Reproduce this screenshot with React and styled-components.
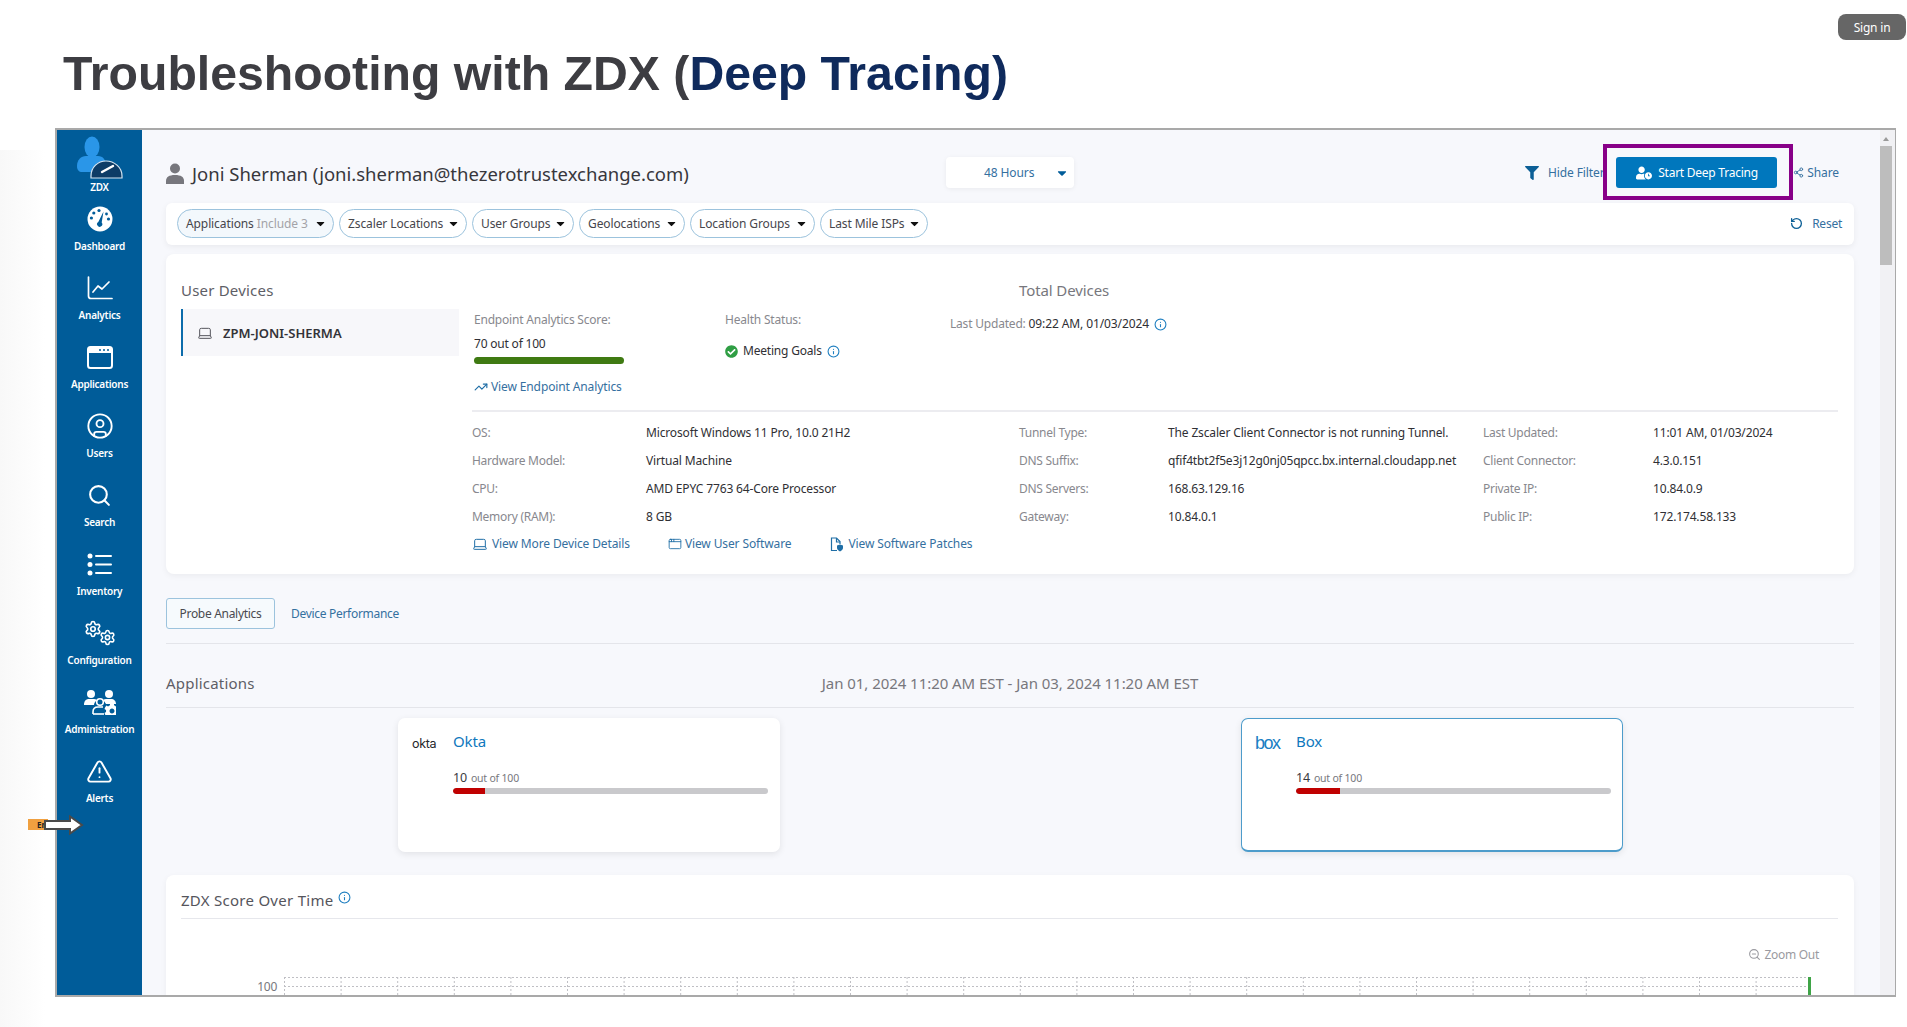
import React from "react"
import styled, { createGlobalStyle } from "styled-components"
import {
  AppWindow, CircleUser, Info, Laptop, RotateCcw, Search, Settings,
  Share2, TrendingUp, TriangleAlert, ZoomOut,
} from "lucide-react"
import { FaCaretDown, FaCheckCircle, FaCog, FaFilter, FaUserClock } from "react-icons/fa"

const GlobalStyle = createGlobalStyle`
  html, body {
    margin: 0;
    background: #fff;
    font-family: "Noto Sans", "Open Sans", sans-serif;
  }
  * { box-sizing: border-box; }
`

const Page = styled.div`
  position: relative;
  width: 1907px;
  height: 1027px;
  overflow: hidden;
  background: linear-gradient(90deg, #f8f8f8, #fff 45px) 0 150px / 50px 100% no-repeat #fff;
`

const SignIn = styled.div`
  position: absolute;
  top: 14px;
  right: 1px;
  width: 68px;
  height: 26px;
  border-radius: 8px;
  background: #666;
  color: #fff;
  font-size: 12px;
  letter-spacing: -0.2px;
  display: flex;
  align-items: center;
  justify-content: center;
`

const Title = styled.h1`
  margin: 0;
  padding: 43px 0 0 63px;
  height: 128px;
  font: bold 48.2px/60px "Liberation Sans", Arial, sans-serif;
  color: #3d3d42;
  span { color: #0f2a5c; }
`

const Frame = styled.div`
  display: flex;
  margin-left: 55px;
  width: 1841px;
  height: 869px;
  border: 2px solid #a9a9a9;
  border-right-width: 1px;
  overflow: hidden;
  background: #f7f8fc;
`

const Sidebar = styled.nav`
  flex: 0 0 85px;
  background: #005c99;
  color: #fff;
`

const NavItem = styled.div`
  height: ${(p) => (p.$logo ? "65px" : "69px")};
  padding-top: ${(p) => (p.$logo ? "6px" : "9px")};
  display: flex;
  flex-direction: column;
  align-items: center;
`

const NavIcon = styled.div`
  height: ${(p) => (p.$logo ? "44px" : "30px")};
  margin-bottom: ${(p) => (p.$logo ? "0" : "5px")};
  display: flex;
  justify-content: center;
  align-items: ${(p) => (p.$logo ? "flex-start" : "center")};
`

const NavLabel = styled.div`
  font-size: 10px;
  line-height: 14px;
  font-weight: 600;
  letter-spacing: -0.25px;
  white-space: nowrap;
`

const Main = styled.main`
  flex: 1;
  min-width: 0;
  padding: 0 26px 0 24px;
  overflow: hidden;
`

const Scrollbar = styled.div`
  flex: 0 0 15px;
  background: #f1f1f4;
  padding-top: 7px;
`

const ScrollArrow = styled.div`
  width: 0;
  margin: 0 auto 5px 3px;
  border: 3.5px solid transparent;
  border-bottom: 4px solid #9a9a9a;
  border-top: 0;
`

const ScrollThumb = styled.div`
  width: 12px;
  height: 119px;
  background: #bdbdbd;
`

const Header = styled.header`
  display: flex;
  align-items: flex-start;
  height: 73px;
  padding-top: 27px;
`

const UserBlock = styled.div`
  flex: 0 0 780px;
  height: 31px;
  display: flex;
  align-items: center;
  gap: 8px;
  padding-top: 2px;
  font-size: 18.5px;
  letter-spacing: 0;
  color: #37373c;
  white-space: nowrap;
`

const RangeSelect = styled.div`
  flex: 0 0 128px;
  height: 31px;
  border-radius: 4px;
  background: #fff;
  box-shadow: 0 1px 5px rgba(0, 0, 0, 0.06);
  display: flex;
  align-items: center;
  justify-content: space-between;
  padding: 0 5px 0 38px;
  font-size: 12px;
  letter-spacing: -0.1px;
  color: #35709f;
`

const HeaderActions = styled.div`
  margin-left: auto;
  display: flex;
  align-items: flex-start;
  padding-right: 15px;
  color: #35709f;
  font-size: 12px;
  letter-spacing: -0.1px;
`

const ActionLink = styled.div`
  height: 31px;
  display: flex;
  align-items: center;
  gap: ${(p) => p.$gap || "3px"};
  white-space: nowrap;
`

const Highlight = styled.div`
  position: relative;
  margin: -13px 0 0 -7px;
  width: 190px;
  height: 56px;
  padding: 9px 0 0 9px;
  border: 4px solid #880088;
  background: #f7f8fc;
`

const DeepTraceButton = styled.button`
  width: 161px;
  height: 31px;
  border: 0;
  border-radius: 3px;
  background: #0077bd;
  color: #fff;
  display: flex;
  align-items: center;
  gap: 6px;
  padding: 0 0 0 20px;
  font: inherit;
  letter-spacing: -0.25px;
  white-space: nowrap;
`

const FilterBar = styled.div`
  height: 42px;
  padding: 0 12px 2px 11px;
  border-radius: 6px;
  background: #fff;
  box-shadow: 0 2px 6px rgba(0, 0, 0, 0.06);
  display: flex;
  align-items: center;
  gap: 5px;
`

const Pill = styled.div`
  height: 29px;
  width: ${(p) => p.$w}px;
  padding: 0 6px 0 8px;
  border: 1px solid #9cc3dd;
  border-radius: 15px;
  background: ${(p) => (p.$active ? "#f3f8fc" : "#fff")};
  display: flex;
  align-items: center;
  justify-content: space-between;
  font-size: 12px;
  letter-spacing: -0.1px;
  color: #46464c;
  white-space: nowrap;
  em { font-style: normal; color: #a3a3a8; }
`

const ResetLink = styled.div`
  margin-left: auto;
  display: flex;
  align-items: center;
  gap: 9px;
  color: #35709f;
  font-size: 12px;
  letter-spacing: -0.25px;
`

const Card = styled.section`
  background: #fff;
  border-radius: 8px;
  box-shadow: 0 2px 6px rgba(0, 0, 0, 0.05);
`

const DeviceCard = styled(Card)`
  margin-top: 9px;
  height: 320px;
  padding: 26px 16px 0 15px;
`

const CardHead = styled.div`
  display: flex;
  height: 20px;
  margin-bottom: 9px;
  font-size: 15px;
  line-height: 20px;
  color: #5e5e66;
`

const HeadCell = styled.div`
  width: ${(p) => p.$w || "auto"};
  color: ${(p) => p.$color || "inherit"};
  letter-spacing: ${(p) => p.$spacing || "0.2px"};
`

const DeviceBody = styled.div`
  display: flex;
`

const DeviceCol = styled.div`
  flex: 0 0 291px;
`

const DeviceRow = styled.div`
  width: 278px;
  height: 47px;
  background: #f7f7fa;
  border-left: 2px solid #0c6cab;
  display: flex;
  align-items: center;
  gap: 10px;
  padding: 1px 0 0 14px;
  font-size: 13px;
  font-weight: 600;
  color: #333338;
`

const InfoCol = styled.div`
  flex: 1;
  min-width: 0;
`

const Summary = styled.div`
  display: flex;
  height: 103px;
  padding: 1px 0 0 2px;
  border-bottom: 2px solid #ececf0;
`

const SummaryCell = styled.div`
  flex: 0 0 ${(p) => p.$w}px;
`

const MutedLine = styled.div`
  height: 20px;
  line-height: 20px;
  font-size: 12px;
  letter-spacing: -0.2px;
  color: #88888e;
  white-space: nowrap;
  b { font-weight: 400; letter-spacing: -0.1px; color: #2f2f34; }
`

const ValueLine = styled(MutedLine)`
  display: flex;
  align-items: center;
  gap: 5px;
  margin-top: ${(p) => p.$top || "0"};
  color: #2f2f34;
  letter-spacing: -0.2px;
`

const ScoreBar = styled.div`
  width: 150px;
  height: 7px;
  margin-top: 3px;
  border-radius: 4px;
  background: #3f7a12;
`

const LinkLine = styled.div`
  display: flex;
  align-items: center;
  gap: ${(p) => p.$gap || "3px"};
  margin-top: ${(p) => p.$top || "0"};
  margin-right: ${(p) => p.$right || "0"};
  color: #35709f;
  font-size: 12px;
  line-height: 20px;
  letter-spacing: -0.12px;
  white-space: nowrap;
`

const DetailGrid = styled.dl`
  display: grid;
  grid-template-columns: 174px 373px 149px 315px 170px 1fr;
  grid-auto-rows: 28px;
  align-items: center;
  margin: 6px 0 0;
  font-size: 12px;
  white-space: nowrap;
  dt { color: #88888e; letter-spacing: -0.27px; }
  dd { margin: 0; color: #2f2f34; letter-spacing: -0.15px; }
`

const LinkRow = styled.div`
  display: flex;
  height: 28px;
  align-items: center;
`

const TabRow = styled.div`
  margin-top: 24px;
  display: flex;
  align-items: center;
  height: 31px;
  gap: 16px;
  font-size: 12px;
  letter-spacing: -0.3px;
`

const ActiveTab = styled.div`
  width: 109px;
  height: 31px;
  border: 1px solid #9cc3dd;
  border-radius: 3px;
  background: #f6fafd;
  color: #4a4a50;
  display: flex;
  align-items: center;
  justify-content: center;
`

const PlainTab = styled.div`
  color: #35709f;
`

const TabDivider = styled.div`
  margin-top: 14px;
  height: 1px;
  background: #e4e5ea;
`

const AppsHead = styled.div`
  display: grid;
  grid-template-columns: 1fr auto 1fr;
  height: 64px;
  padding-top: 29px;
  border-bottom: 1px solid #e4e5ea;
  font-size: 15px;
  line-height: 20px;
  letter-spacing: 0.2px;
  color: #5e5e66;
`

const DateRange = styled.div`
  font-size: 15px;
  letter-spacing: -0.05px;
  color: #77777d;
`

const AppsGrid = styled.div`
  margin-top: 10px;
  display: grid;
  grid-template-columns: 1fr 1fr;
  justify-items: center;
`

const AppCard = styled(Card)`
  width: 382px;
  height: 134px;
  margin-left: ${(p) => (p.$selected ? "0" : "2px")};
  display: flex;
  padding: 12px 11px 0 13px;
  box-shadow: 0 2px 7px rgba(0, 0, 0, 0.09);
  border: ${(p) => (p.$selected ? "1px solid #4d9ccb" : "1px solid transparent")};
  border-bottom-width: ${(p) => (p.$selected ? "2px" : "1px")};
  border-radius: 7px;
`

const AppLogo = styled.div`
  flex: 0 0 41px;
  height: 22px;
  display: flex;
  align-items: center;
  margin-top: 1px;
  font: ${(p) => p.$font};
  color: ${(p) => p.$color};
  letter-spacing: ${(p) => p.$spacing};
`

const AppBody = styled.div`
  flex: 1;
`

const AppName = styled.div`
  height: 22px;
  line-height: 20px;
  font-size: 15px;
  letter-spacing: -0.1px;
  color: #0f78bd;
`

const AppScore = styled.div`
  margin-top: 16px;
  height: 17px;
  font-size: 12.5px;
  line-height: 17px;
  letter-spacing: -0.2px;
  color: #3a3a3f;
  small { margin-left: 4px; font-size: 10.5px; color: #77777d; }
`

const Track = styled.div`
  margin-top: 2px;
  height: 6px;
  border-radius: 3px;
  background: #c9c9cc;
  overflow: hidden;
`

const Fill = styled.div`
  height: 100%;
  background: #c00000;
  border-radius: 3px 0 0 3px;
`

const ScoreCard = styled(Card)`
  margin-top: 23px;
  height: 300px;
  padding: 12px 16px 0 15px;
`

const ScoreHead = styled.div`
  height: 32px;
  border-bottom: 1px solid #e6e7ec;
  display: flex;
  align-items: flex-start;
  gap: 5px;
  font-size: 15px;
  line-height: 26px;
  letter-spacing: 0.27px;
  color: #55555c;
  svg { margin-top: 4px; }
`

const ZoomLink = styled.div`
  margin-top: 27px;
  padding-right: 19px;
  height: 16px;
  display: flex;
  align-items: center;
  justify-content: flex-end;
  gap: 4px;
  font-size: 12px;
  letter-spacing: -0.3px;
  color: #9a9aa0;
`

const ChartRow = styled.div`
  margin-top: 15px;
  display: flex;
  gap: 7px;
`

const AxisLabel = styled.div`
  flex: 0 0 96px;
  text-align: right;
  padding-top: 2px;
  font-size: 12px;
  line-height: 16px;
  letter-spacing: -0.3px;
  color: #77777d;
`

const Pointer = styled.div`
  position: absolute;
  left: 28px;
  top: 815px;
  width: 56px;
  height: 20px;
`

const PointerTag = styled.div`
  position: absolute;
  left: 0;
  top: 4px;
  width: 20px;
  height: 11px;
  padding-left: 9px;
  background: #f0a040;
  color: #222;
  font-size: 8px;
  font-weight: 700;
  line-height: 11px;
`

const PointerArrow = styled.svg`
  position: absolute;
  left: 15px;
  top: 0;
`

const ZdxLogo = () => (
  <svg width="47" height="44" viewBox="0 0 47 44">
    <ellipse cx="16" cy="11" rx="7.500" ry="10.500" fill="#2a96e8" />
    <path d="M1 30c0-6 4-10 9-10h12c5 0 8 4 8 10 0 4-2 6-5 6H6c-3 0-5-2-5-6z" fill="#2a96e8" />
    <path d="M15 42v-2c0-9 7-15 15-15s16 6 16 15v2z" fill="#0d3c66" stroke="#d5e4f0" strokeWidth="1.200" />
    <path d="M26 36l11-6" stroke="#fff" strokeWidth="2.400" strokeLinecap="round" />
  </svg>
)

const DashboardIcon = () => (
  <svg width="26" height="26" viewBox="0 0 26 26">
    <circle cx="13" cy="13" r="12.5" fill="#fff" />
    <g fill="#005c99">
      <circle cx="12" cy="4.500" r="1.600" />
      <circle cx="6.800" cy="7" r="1.600" />
      <circle cx="4.400" cy="12" r="1.600" />
      <circle cx="19.500" cy="8" r="1.400" />
      <circle cx="21.500" cy="13" r="1.600" />
      <path d="M16.500 5.500l-1.800 11a2.600 2.600 0 1 1-3.400-.6z" />
    </g>
  </svg>
)

const AnalyticsIcon = () => (
  <svg width="26" height="24" viewBox="0 0 26 24" fill="none" stroke="#fff" strokeWidth="1.700" strokeLinecap="round" strokeLinejoin="round">
    <path d="M1.500 1v19a2.500 2.500 0 0 0 2.500 2.500h21" />
    <path d="M6 16l5-6 4 3 7-7" />
  </svg>
)

const ApplicationsIcon = () => (
  <svg width="26" height="23" viewBox="0 0 26 23">
    <rect x="1" y="1" width="24" height="21" rx="2.500" fill="none" stroke="#fff" strokeWidth="2" />
    <path d="M1 3.500A2.500 2.500 0 0 1 3.500 1h19A2.500 2.500 0 0 1 25 3.500V7H1z" fill="#fff" />
    <g fill="#005c99">
      <circle cx="13" cy="4" r="1" />
      <circle cx="17" cy="4" r="1" />
      <circle cx="21" cy="4" r="1" />
    </g>
  </svg>
)

const InventoryIcon = () => (
  <svg width="26" height="23" viewBox="0 0 26 23" fill="#fff">
    <circle cx="3" cy="3" r="2.500" />
    <circle cx="3" cy="11.500" r="2.500" />
    <circle cx="3" cy="20" r="2.500" />
    <rect x="8" y="2" width="17" height="2" rx="1" />
    <rect x="8" y="10.500" width="17" height="2" rx="1" />
    <rect x="8" y="19" width="17" height="2" rx="1" />
  </svg>
)

const ConfigIcon = () => (
  <svg width="32" height="26" viewBox="0 0 32 26">
    <Settings x="0" y="0" width="18" height="18" color="#fff" strokeWidth={2.2} />
    <Settings x="15" y="9" width="17" height="17" color="#fff" strokeWidth={2.2} />
  </svg>
)

const AdminIcon = () => (
  <svg width="32" height="25" viewBox="0 0 32 25" fill="#fff">
    <circle cx="7" cy="4" r="4" />
    <circle cx="25" cy="4" r="4" />
    <path d="M0 15c0-4 2-6 5-6h5c1 0 2 .3 3 1-2 1.500-3 3.500-3 5z" />
    <path d="M19 10c1-.7 2-1 3-1h5c3 0 5 2 5 5h-10c-1-1.800-2-3-3-4z" />
    <circle cx="16" cy="12" r="3.300" fill="none" stroke="#fff" strokeWidth="1.600" />
    <path d="M9 24v-2c0-3 2-5 5-5h5" fill="none" stroke="#fff" strokeWidth="1.600" />
    <path d="M9 24h11" stroke="#fff" strokeWidth="1.600" />
    <FaCog x="20" y="13" width="12" height="12" />
  </svg>
)

const PersonIcon = () => (
  <svg width="18" height="22" viewBox="0 0 18 22" fill="#77777d">
    <circle cx="9" cy="5.500" r="5" />
    <path d="M0 21v-3c0-4 3-6 9-6s9 2 9 6v3z" />
  </svg>
)

const PatchIcon = () => (
  <svg width="15" height="15" viewBox="0 0 15 15" fill="none" stroke="#1f6ea6" strokeWidth="1.200">
    <path d="M8 13.500H2.500V1h5L11 4.500V7" />
    <path d="M7.500 1v4H11" />
    <path d="M11 7.500l3 1v2.500c0 1.500-1.500 2.800-3 3.400-1.500-.6-3-1.900-3-3.400V8.500z" fill="#1f6ea6" stroke="none" />
  </svg>
)

const navItems = [
  { label: "Dashboard", icon: <DashboardIcon /> },
  { label: "Analytics", icon: <AnalyticsIcon /> },
  { label: "Applications", icon: <ApplicationsIcon /> },
  { label: "Users", icon: <CircleUser size={28} strokeWidth={1.6} /> },
  { label: "Search", icon: <Search size={25} strokeWidth={2} /> },
  { label: "Inventory", icon: <InventoryIcon /> },
  { label: "Configuration", icon: <ConfigIcon /> },
  { label: "Administration", icon: <AdminIcon /> },
  { label: "Alerts", icon: <TriangleAlert size={27} strokeWidth={1.7} /> },
]

const pills = [
  { label: "Applications", extra: " Include 3", w: 157, active: true },
  { label: "Zscaler Locations", w: 128 },
  { label: "User Groups", w: 102 },
  { label: "Geolocations", w: 106 },
  { label: "Location Groups", w: 125 },
  { label: "Last Mile ISPs", w: 108 },
]

const details = [
  ["OS:", "Microsoft Windows 11 Pro, 10.0 21H2", "Tunnel Type:", "The Zscaler Client Connector is not running Tunnel.", "Last Updated:", "11:01 AM, 01/03/2024"],
  ["Hardware Model:", "Virtual Machine", "DNS Suffix:", "qfif4tbt2f5e3j12g0nj05qpcc.bx.internal.cloudapp.net", "Client Connector:", "4.3.0.151"],
  ["CPU:", "AMD EPYC 7763 64-Core Processor", "DNS Servers:", "168.63.129.16", "Private IP:", "10.84.0.9"],
  ["Memory (RAM):", "8 GB", "Gateway:", "10.84.0.1", "Public IP:", "172.174.58.133"],
]

const ChartGrid = () => {
  const ticks = Array.from({ length: 27 }, (_, i) => 0.5 + i * 56.6)
  return (
    <svg width="1530" height="40">
      <g stroke="#bfbfc4" strokeDasharray="2 2" fill="none">
        <path d="M0 .5H1525" />
        <path d="M0 9.500H1525" />
        {ticks.map((x) => (
          <path key={x} d={`M${x} 0V40`} />
        ))}
      </g>
      <rect x="1524" y="0" width="3" height="40" fill="#3fa447" />
    </svg>
  )
}

const App = () => (
  <Page>
    <GlobalStyle />
    <SignIn>Sign in</SignIn>
    <Title>
      Troubleshooting with ZDX (<span>Deep Tracing)</span>
    </Title>

    <Frame>
      <Sidebar>
        <NavItem $logo>
          <NavIcon $logo><ZdxLogo /></NavIcon>
          <NavLabel>ZDX</NavLabel>
        </NavItem>
        {navItems.map((item) => (
          <NavItem key={item.label}>
            <NavIcon>{item.icon}</NavIcon>
            <NavLabel>{item.label}</NavLabel>
          </NavItem>
        ))}
      </Sidebar>

      <Main>
        <Header>
          <UserBlock>
            <PersonIcon />
            Joni Sherman (joni.sherman@thezerotrustexchange.com)
          </UserBlock>
          <RangeSelect>
            48 Hours
            <FaCaretDown size={14} color="#005c99" />
          </RangeSelect>
          <HeaderActions>
            <ActionLink $gap="9px">
              <FaFilter size={14} color="#0c5f96" />
              Hide Filters
            </ActionLink>
            <Highlight>
              <DeepTraceButton>
                <FaUserClock size={16} />
                Start Deep Tracing
              </DeepTraceButton>
            </Highlight>
            <ActionLink>
              <Share2 size={11} />
              Share
            </ActionLink>
          </HeaderActions>
        </Header>

        <FilterBar>
          {pills.map((pill) => (
            <Pill key={pill.label} $w={pill.w} $active={pill.active}>
              <span>
                {pill.label}
                {pill.extra && <em>{pill.extra}</em>}
              </span>
              <FaCaretDown size={13} color="#111" />
            </Pill>
          ))}
          <ResetLink>
            <RotateCcw size={13} strokeWidth={2.4} color="#0c5f96" />
            Reset
          </ResetLink>
        </FilterBar>

        <DeviceCard>
          <CardHead>
            <HeadCell $w="838px">User Devices</HeadCell>
            <HeadCell $color="#77777d" $spacing="-0.1px">Total Devices</HeadCell>
          </CardHead>
          <DeviceBody>
            <DeviceCol>
              <DeviceRow>
                <Laptop size={16} strokeWidth={1.5} color="#55555c" />
                ZPM-JONI-SHERMA
              </DeviceRow>
            </DeviceCol>
            <InfoCol>
              <Summary>
                <SummaryCell $w={251}>
                  <MutedLine>Endpoint Analytics Score:</MutedLine>
                  <ValueLine $top="4px">70 out of 100</ValueLine>
                  <ScoreBar />
                  <LinkLine $top="13px">
                    <TrendingUp size={14} color="#1f6ea6" />
                    View Endpoint Analytics
                  </LinkLine>
                </SummaryCell>
                <SummaryCell $w={225}>
                  <MutedLine>Health Status:</MutedLine>
                  <ValueLine $top="11px">
                    <FaCheckCircle size={13} color="#2f9e44" />
                    Meeting Goals
                    <Info size={13} color="#1f7fc0" />
                  </ValueLine>
                </SummaryCell>
                <SummaryCell $w={300}>
                  <ValueLine $top="4px">
                    <MutedLine>Last Updated: <b>09:22 AM, 01/03/2024</b></MutedLine>
                    <Info size={13} color="#1f7fc0" />
                  </ValueLine>
                </SummaryCell>
              </Summary>

              <DetailGrid>
                {details.flat().map((text, i) =>
                  i % 2 === 0 ? <dt key={i}>{text}</dt> : <dd key={i}>{text}</dd>
                )}
              </DetailGrid>

              <LinkRow>
                <LinkLine $gap="4px" $right="38px">
                  <Laptop size={16} strokeWidth={1.5} color="#1f6ea6" />
                  View More Device Details
                </LinkLine>
                <LinkLine $right="38px">
                  <AppWindow size={14} strokeWidth={1.5} color="#1f6ea6" />
                  View User Software
                </LinkLine>
                <LinkLine $gap="4px">
                  <PatchIcon />
                  View Software Patches
                </LinkLine>
              </LinkRow>
            </InfoCol>
          </DeviceBody>
        </DeviceCard>

        <TabRow>
          <ActiveTab>Probe Analytics</ActiveTab>
          <PlainTab>Device Performance</PlainTab>
        </TabRow>
        <TabDivider />

        <AppsHead>
          <div>Applications</div>
          <DateRange>Jan 01, 2024 11:20 AM EST - Jan 03, 2024 11:20 AM EST</DateRange>
        </AppsHead>

        <AppsGrid>
          <AppCard>
            <AppLogo $font={'400 12.5px "Inter", sans-serif'} $color="#26262a" $spacing="-0.3px">okta</AppLogo>
            <AppBody>
              <AppName>Okta</AppName>
              <AppScore>10<small>out of 100</small></AppScore>
              <Track><Fill style={{ width: "10%" }} /></Track>
            </AppBody>
          </AppCard>
          <AppCard $selected>
            <AppLogo $font={'400 18px "Liberation Sans", sans-serif'} $color="#1a80c4" $spacing="-1.5px">box</AppLogo>
            <AppBody>
              <AppName>Box</AppName>
              <AppScore>14<small>out of 100</small></AppScore>
              <Track><Fill style={{ width: "14%" }} /></Track>
            </AppBody>
          </AppCard>
        </AppsGrid>

        <ScoreCard>
          <ScoreHead>
            ZDX Score Over Time
            <Info size={13} color="#1f7fc0" />
          </ScoreHead>
          <ZoomLink>
            <ZoomOut size={13} />
            Zoom Out
          </ZoomLink>
          <ChartRow>
            <AxisLabel>100</AxisLabel>
            <ChartGrid />
          </ChartRow>
        </ScoreCard>
      </Main>

      <Scrollbar>
        <ScrollArrow />
        <ScrollThumb />
      </Scrollbar>
    </Frame>

    <Pointer>
      <PointerTag>En</PointerTag>
      <PointerArrow width="41" height="20" viewBox="0 0 41 20">
        <path d="M2 6h25V1.500L39 10 27 18.500V14H2z" fill="#fff" stroke="#4a4a4a" strokeWidth="2" />
      </PointerArrow>
    </Pointer>
  </Page>
)

export default App
